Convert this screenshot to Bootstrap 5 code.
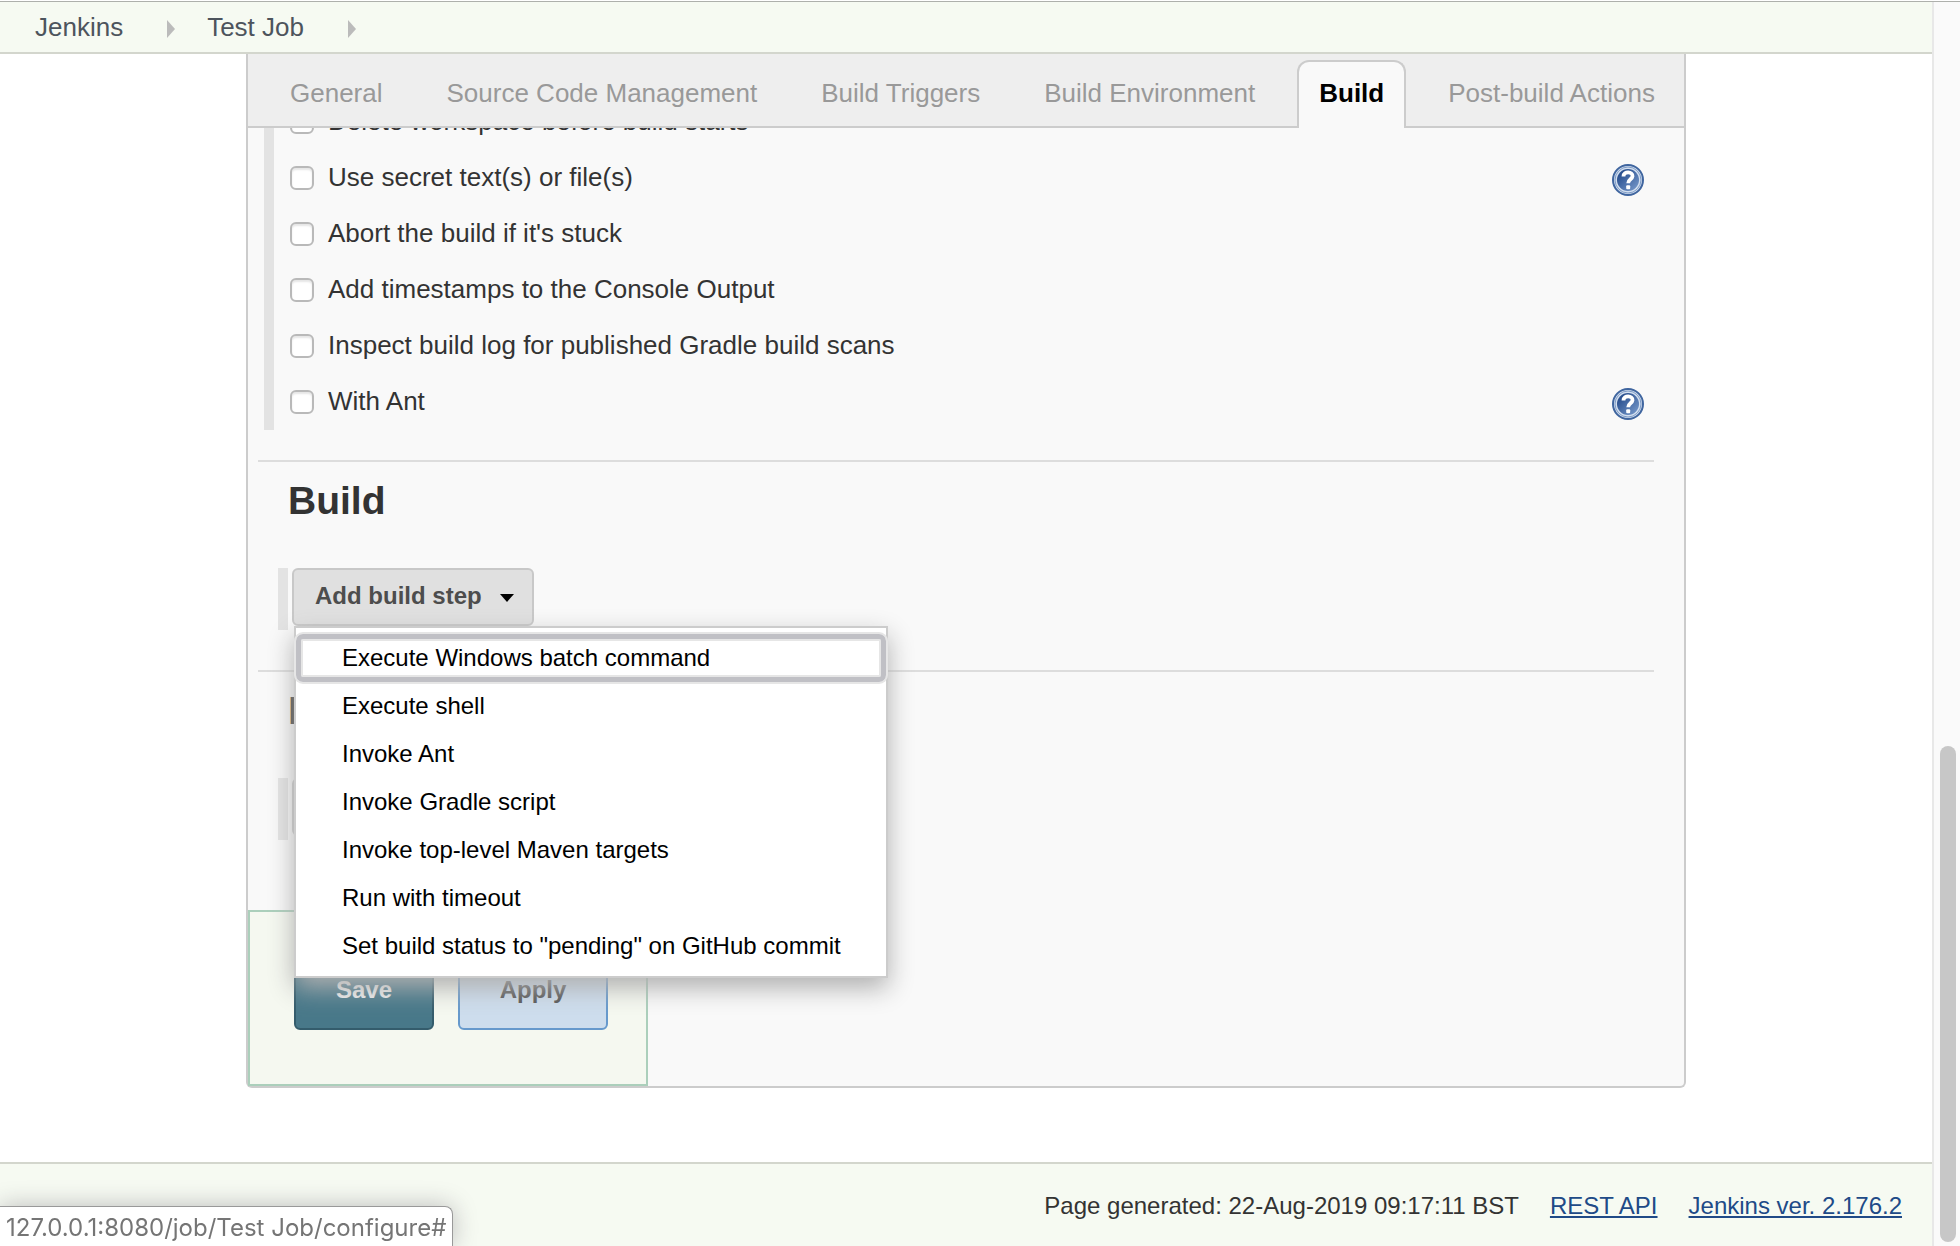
<!DOCTYPE html>
<html lang="en">
<head>
<meta charset="utf-8">
<meta name="viewport" content="width=device-width, initial-scale=1">
<title>Test Job Config [Jenkins]</title>
<link href="https://cdn.jsdelivr.net/npm/bootstrap@5.3.0/dist/css/bootstrap.min.css" rel="stylesheet">
<style>
  html, body { height: 100%; }
  body { font-family: "Liberation Sans", Arial, sans-serif; font-size: 26px; line-height: 32px; color: #333; background: #fff; }
  .app-shell { height: calc(100vh - 1px); overflow: hidden; border-top: 1px solid #aeb0ac; }
  .window-top { height: 1px; background: #fff; }
  .crumb-bar { background: #f6faf2; border-bottom: 2px solid #d3d6cd; height: 52px; padding: 0 35px; }
  .crumb-bar a { color: #4d545d; text-decoration: none; }
  .crumb-arrow { width: 8px; height: 18px; margin: 4px 32px 0 44px; }
  .config-frame { max-width: 1440px; border: 2px solid #ccc; border-top: 0; border-radius: 0 0 6px 6px; background: #f9f9f9; }
  .tab-strip { height: 74px; background: #eee; border-bottom: 2px solid #ccc; padding: 6px 0 0 20px; gap: 20px; position: relative; z-index: 2; }
  .tab-strip .nav-link { height: 68px; padding: 15px 20px 0; border: 2px solid transparent; border-bottom: 0; border-radius: 12px 12px 0 0; color: #999; white-space: nowrap; line-height: 32px; }
  .tab-strip .nav-link.active { color: #000; font-weight: 700; background: #f9f9f9; border-color: #ccc; }
  .section-rule { height: 2px; background: #ddd; margin: 0 30px 0 10px; }
  .option-group { margin: -34px 40px 30px 16px; border-left: 10px solid #e3e3e3; padding-left: 16px; }
  .option-row { height: 56px; }
  .option-row label { padding-bottom: 2px; }
  .option-row .form-check-input { width: 24px; height: 24px; margin: 0 14px 0 0; border: 2px solid #b9b9b9; border-radius: 6px; background: #fff; box-shadow: inset 0 2px 2px #e6e6e6; flex: none; }
  .help-btn { width: 32px; height: 32px; }
  .section-title { font-size: 39px; line-height: 48px; font-weight: 700; margin: 15px 0 43px 40px; }
  .step-row { margin-left: 30px; height: 62px; border-left: 10px solid #e3e3e3; padding-left: 4px; }
  .btn-step { height: 58px; padding: 0 18px 2px 21px; border: 2px solid #c8c8c8; border-radius: 6px; background: #e0e0e0; color: #4d4d4d; font-size: 24px; line-height: 32px; font-weight: 700; }
  .btn-step svg { width: 14px; height: 8px; margin-left: 18px; margin-top: 4px; }
  .step-menu { left: 6px; top: 58px; width: 594px; padding: 6px 0; margin: 0; border: 2px solid #ccc; border-radius: 0; font-size: 24px; background: #fff; box-shadow: 0 10px 24px #b0b0b0; z-index: 5; }
  .step-menu .dropdown-item { height: 48px; padding: 8px 46px; line-height: 32px; color: #000; }
  .step-menu .dropdown-item.focused { position: relative; }
  .step-menu .dropdown-item.focused::after { content: ""; position: absolute; inset: 0; border: 5px solid #c0c0c5; border-radius: 7px; box-shadow: 0 0 0 2px #e6e6e6, inset 0 0 0 2px #e6e6e6; }
  .row-gap-below { margin-bottom: 40px; }
  .row-gap-last { margin-bottom: 70px; }
  .save-bar { width: 400px; height: 176px; border: 2px solid #abcfbb; background: #f5f8f0; padding: 40px 36px 0 44px; gap: 24px; }
  .save-bar .btn { height: 78px; padding: 0 0 2px; font-size: 24px; line-height: 32px; font-weight: 700; border-width: 2px; border-radius: 6px; }
  .save-bar .btn-save { width: 140px; background: #487889; border-color: #345c6c; color: #eee; }
  .save-bar .btn-apply { width: 150px; background: #cddded; border-color: #6699cc; color: #555; }
  .page-foot { background: #f6faf2; border-top: 2px solid #d3d6cd; font-size: 24px; margin-top: 74px; padding: 26px 30px 0; gap: 31px; }
  .page-foot a { color: #204a87; }
  .link-preview { left: 0; bottom: 0; height: 40px; padding: 5px 6px 0; border: 1px solid #999; border-left: 0; border-bottom: 0; border-radius: 0 8px 0 0; background: #fff; color: #757575; font-family: Inter, sans-serif; font-size: 24px; line-height: 32px; box-shadow: 0 0 24px #bbb; }
  .scroll-track { width: 28px; background: #fafafa; border-left: 2px solid #e8e8e8; padding: 0 4px 4px 6px; }
  .scroll-thumb { height: 40%; border-radius: 8px; background: #c7c7c7; }
</style>
</head>
<body>
<div class="window-top"></div>
<div class="app-shell d-flex">
  <div class="flex-grow-1 d-flex flex-column overflow-hidden">
    <nav class="crumb-bar d-flex align-items-center flex-shrink-0" aria-label="Breadcrumb">
      <a href="#">Jenkins</a>
      <svg class="crumb-arrow" viewBox="0 0 8 18" aria-hidden="true"><path d="M0 0L8 9L0 18Z" fill="#bbb"/></svg>
      <a href="#">Test Job</a>
      <svg class="crumb-arrow" viewBox="0 0 8 18" aria-hidden="true"><path d="M0 0L8 9L0 18Z" fill="#bbb"/></svg>
    </nav>
    <main class="config-frame w-100 mx-auto flex-shrink-0">
      <nav class="tab-strip d-flex">
        <a class="nav-link" href="#">General</a>
        <a class="nav-link" href="#">Source Code Management</a>
        <a class="nav-link" href="#">Build Triggers</a>
        <a class="nav-link" href="#">Build Environment</a>
        <a class="nav-link active" href="#">Build</a>
        <a class="nav-link" href="#">Post-build Actions</a>
      </nav>
      <form>
        <div class="option-group">
          <div class="option-row d-flex align-items-center"><input class="form-check-input" type="checkbox" id="o1"><label for="o1">Delete workspace before build starts</label></div>
          <div class="option-row d-flex align-items-center"><input class="form-check-input" type="checkbox" id="o2"><label for="o2">Use secret text(s) or file(s)</label>
            <button type="button" class="help-btn btn p-0 border-0 ms-auto mt-1 d-flex" aria-label="Help"><svg width="32" height="32" viewBox="0 0 32 32"><use href="#help"/></svg></button></div>
          <div class="option-row d-flex align-items-center"><input class="form-check-input" type="checkbox" id="o3"><label for="o3">Abort the build if it's stuck</label></div>
          <div class="option-row d-flex align-items-center"><input class="form-check-input" type="checkbox" id="o4"><label for="o4">Add timestamps to the Console Output</label></div>
          <div class="option-row d-flex align-items-center"><input class="form-check-input" type="checkbox" id="o5"><label for="o5">Inspect build log for published Gradle build scans</label></div>
          <div class="option-row d-flex align-items-center"><input class="form-check-input" type="checkbox" id="o6"><label for="o6">With Ant</label>
            <button type="button" class="help-btn btn p-0 border-0 ms-auto mt-1 d-flex" aria-label="Help"><svg width="32" height="32" viewBox="0 0 32 32"><use href="#help"/></svg></button></div>
        </div>
        <div class="section-rule"></div>
        <h2 class="section-title">Build</h2>
        <div class="step-row row-gap-below position-relative">
          <button type="button" class="btn btn-step d-flex align-items-center" aria-expanded="true">Add build step<svg viewBox="0 0 14 8" aria-hidden="true"><path d="M0 0H14L7 8Z" fill="#000"/></svg></button>
          <div class="dropdown-menu step-menu show">
            <a class="dropdown-item focused" href="#">Execute Windows batch command</a>
            <a class="dropdown-item" href="#">Execute shell</a>
            <a class="dropdown-item" href="#">Invoke Ant</a>
            <a class="dropdown-item" href="#">Invoke Gradle script</a>
            <a class="dropdown-item" href="#">Invoke top-level Maven targets</a>
            <a class="dropdown-item" href="#">Run with timeout</a>
            <a class="dropdown-item" href="#">Set build status to "pending" on GitHub commit</a>
          </div>
        </div>
        <div class="section-rule"></div>
        <h2 class="section-title" aria-label="Post-build Actions">P</h2>
        <div class="step-row row-gap-last">
          <button type="button" class="btn btn-step" aria-label="Add post-build action"></button>
        </div>
        <div class="save-bar d-flex">
          <button type="button" class="btn btn-save">Save</button>
          <button type="button" class="btn btn-apply">Apply</button>
        </div>
      </form>
    </main>
    <footer class="page-foot d-flex justify-content-end flex-grow-1">
      <span>Page generated: 22-Aug-2019 09:17:11 BST</span>
      <a href="#">REST API</a>
      <a href="#">Jenkins ver. 2.176.2</a>
    </footer>
  </div>
  <div class="scroll-track d-flex flex-column justify-content-end flex-shrink-0"><div class="scroll-thumb"></div></div>
</div>
<div class="link-preview position-fixed">127.0.0.1:8080/job/Test Job/configure#</div>
<svg width="0" height="0" class="position-absolute" aria-hidden="true">
  <defs>
    <linearGradient id="helpFill" x1="0" y1="0" x2="1" y2="1"><stop offset="0.2" stop-color="#2c5291"/><stop offset="1" stop-color="#7b9dce"/></linearGradient>
    <symbol id="help" viewBox="0 0 32 32">
      <circle cx="16" cy="16" r="15" fill="#d3dfef" stroke="#3f659f" stroke-width="2"/>
      <circle cx="16" cy="16" r="13" fill="none" stroke="#7f9cc7" stroke-width="1"/>
      <circle cx="16" cy="16" r="11" fill="url(#helpFill)"/>
      <path d="M11.500 12.500C11.500 6.800 21 7.200 20.500 12.300C20.200 15.300 16.200 15.500 16.200 19.200" fill="none" stroke="#fff" stroke-width="3.800"/>
      <rect x="14.200" y="21.200" width="4" height="4" rx="1" fill="#fff"/>
    </symbol>
  </defs>
</svg>
<script src="https://cdn.jsdelivr.net/npm/bootstrap@5.3.0/dist/js/bootstrap.bundle.min.js"></script>
</body>
</html>
